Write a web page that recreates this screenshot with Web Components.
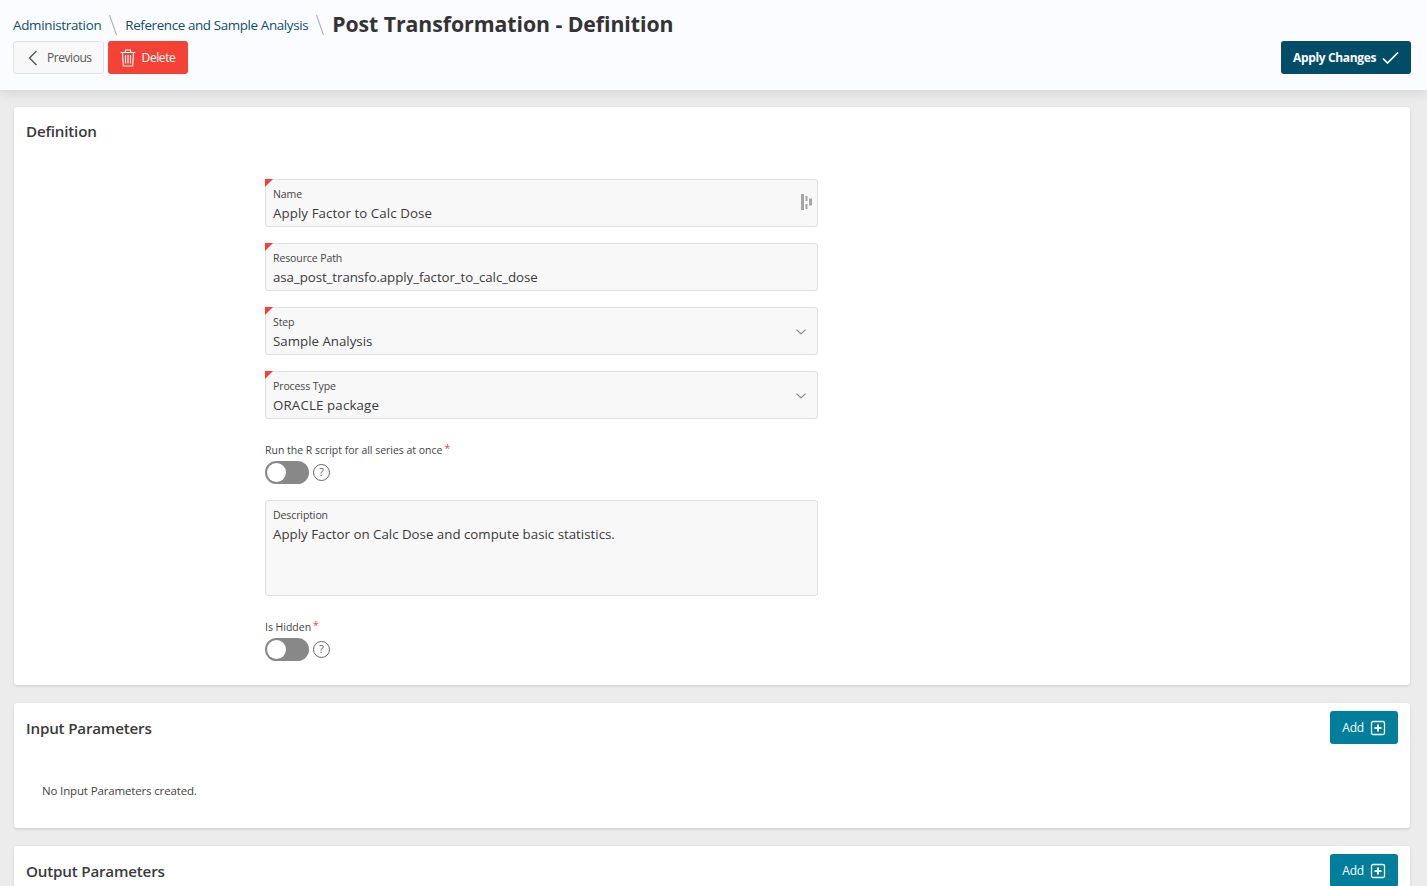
<!DOCTYPE html>
<html lang="en">
<head>
<meta charset="utf-8">
<title>Post Transformation - Definition</title>
<style>
  html, body { margin: 0; height: 886px; overflow: hidden; }
  body { background: #ececec; font-family: "Open Sans", "Noto Sans", sans-serif; color: #333; }
</style>
</head>
<body>
<page-header>
  <a slot="crumb" style="letter-spacing: -.3px">Administration</a>
  <a slot="crumb">Reference and Sample Analysis</a>
  <span slot="title">Post Transformation - Definition</span>
  <ui-button slot="left" kind="plain" icon="back">Previous</ui-button>
  <ui-button slot="left" kind="danger" icon="trash">Delete</ui-button>
  <ui-button slot="right" kind="primary" icon="check" after>Apply Changes</ui-button>
</page-header>

<page-body>
  <ui-card heading="Definition" style="--head: 48px">
    <form-stack>
      <text-field label="Name" value="Apply Factor to Calc Dose" required icon="quick" style="--ls: .08px"></text-field>
      <text-field label="Resource Path" value="asa_post_transfo.apply_factor_to_calc_dose" required style="--ls: -.07px"></text-field>
      <text-field label="Step" value="Sample Analysis" required icon="chevron"></text-field>
      <text-field label="Process Type" value="ORACLE package" required icon="chevron" style="--ls: .14px"></text-field>
      <switch-field label="Run the R script for all series at once"></switch-field>
      <text-field label="Description" value="Apply Factor on Calc Dose and compute basic statistics." area></text-field>
      <switch-field label="Is Hidden"></switch-field>
    </form-stack>
  </ui-card>
  <ui-card heading="Input Parameters">
    <ui-button slot="action" kind="teal" icon="plus" after>Add</ui-button>
    <empty-note>No Input Parameters created.</empty-note>
  </ui-card>
  <ui-card heading="Output Parameters">
    <ui-button slot="action" kind="teal" icon="plus" after>Add</ui-button>
  </ui-card>
</page-body>

<script>
const ICONS = {
  back: '<svg width="16" height="16" viewBox="0 0 16 16" fill="none" stroke="currentColor" stroke-width="1.4"><path d="M10.5 1 3.5 8l7 7"/></svg>',
  trash: '<svg width="16" height="18" viewBox="0 0 16 18" fill="none" stroke="currentColor" stroke-width="1.1"><path d="M.5 3.500h15M5.500 3.500V1h5v2.500M2.500 3.500l.8 13.500h9.400l.8-13.500M5.500 6v8.500M8 6v8.500M10.500 6v8.500"/></svg>',
  check: '<svg width="17" height="14" viewBox="0 0 17 14" fill="none" stroke="currentColor" stroke-width="1.700"><path d="M1 7.500 5.500 12 16 1.500"/></svg>',
  plus: '<svg width="16" height="16" viewBox="0 0 16 16" fill="none" stroke="currentColor"><rect x="1.500" y="1.500" width="13" height="13" rx="1.500" stroke-width="1.300"/><path d="M8 4.500v7M4.500 8h7" stroke-width="2"/></svg>',
  chevron: '<svg width="10" height="6" viewBox="0 0 10 6" fill="none" stroke="#888" stroke-width="1.100"><path d="M.5.700 5 5 9.500.700"/></svg>',
  quick: '<svg width="11" height="16" viewBox="0 0 11 16" fill="#a5a5a5"><rect width="3" height="16"/><rect x="4.500" y="2" width="2" height="5"/><rect x="4.500" y="10" width="2" height="5"/><rect x="8" y="4.500" width="3" height="7"/></svg>'
};

// small helper, every element here is just template + shadow root
class Base extends HTMLElement {
  constructor() {
    super();
    this.attachShadow({ mode: 'open' });
  }
  connectedCallback() {
    this.shadowRoot.innerHTML = `<style>${this.css()}</style>${this.html()}`;
  }
  css() { return ''; }
  html() { return '<slot></slot>'; }
}

class PageHeader extends Base {
  css() { return `
    :host { display: block; height: 90px; box-sizing: border-box; padding: 9px 16px 0 13px;
      background: #fbfcff; box-shadow: 0 2px 12px rgba(0,0,0,.12); position: relative; }
    .crumbs { display: flex; align-items: center; height: 32px; }
    .crumbs ::slotted([slot=crumb]) { font-size: 13.4px; color: #0d5066; letter-spacing: -.38px; }
    .crumbs ::slotted([slot=title]) { font-size: 21.25px; font-weight: 700; color: #333; margin: 0 0 4px 0; letter-spacing: -.05px; }
    .tools { display: flex; justify-content: space-between; }
    .left { display: flex; gap: 4px; }
  `; }
  html() { return `
    <div class="crumbs"><slot name="crumb"></slot><slot name="title"></slot></div>
    <div class="tools"><div class="left"><slot name="left"></slot></div><slot name="right"></slot></div>
  `; }
  connectedCallback() {
    super.connectedCallback();
    // separators go after each crumb
    this.querySelectorAll('[slot=crumb]').forEach(a => {
      a.style.display = 'inline-flex';
      a.style.alignItems = 'center';
      a.insertAdjacentHTML('beforeend', '<svg width="24" height="24" viewBox="0 0 24 24" style="flex:none" fill="none" stroke="#b5b5b5" stroke-width="1.2"><path d="M8.500 2l7 20"/></svg>');
    });
  }
}

class UiButton extends Base {
  css() { return `
    :host { display: inline-block; }
    button { display: flex; align-items: center; height: 33px; box-sizing: border-box; margin: 0; padding: 0 11px;
      border: 1px solid transparent; border-radius: 3px; font: 600 12px "Open Sans", sans-serif; letter-spacing: -.4px; }
    :host([kind=plain]) button { background: #f8f8f8; border-color: #e3e3e3; color: #555; font-weight: 400; padding: 0 11px 0 12px; gap: 5px; letter-spacing: -.45px; }
    :host([kind=danger]) button { background: #f44336; color: #fff; gap: 6px; font-weight: 500; padding-right: 12px; }
    :host([kind=primary]) button { background: #014d68; color: #fff; gap: 6px; font-weight: 700; letter-spacing: -.35px; }
    :host([kind=teal]) button { background: #007e9c; color: #fff; gap: 6px; font-weight: 400; letter-spacing: -.2px; padding-left: 11px; padding-right: 11px; }
    svg { display: block; }
  `; }
  html() {
    const icon = ICONS[this.getAttribute('icon')] || '';
    return this.hasAttribute('after') ? `<button><slot></slot>${icon}</button>` : `<button>${icon}<slot></slot></button>`;
  }
}

class PageBody extends Base {
  css() { return `:host { display: flex; flex-direction: column; gap: 18px; padding: 17px 17px 0 14px; }`; }
}

class UiCard extends Base {
  css() { return `
    :host { display: block; background: #fff; border-radius: 3px; box-shadow: 0 1px 3px rgba(0,0,0,.14); }
    .head { display: flex; justify-content: space-between; align-items: center; height: var(--head, 50px); padding: 0 12px; box-sizing: border-box; }
    .head ::slotted([slot=action]) { margin-bottom: 1px; }
    h2 { margin: 0; font-size: 15.2px; font-weight: 600; color: #3a3a3a; letter-spacing: -.2px; }
  `; }
  html() { return `
    <div class="head"><h2>${this.getAttribute('heading')}</h2><slot name="action"></slot></div>
    <slot></slot>
  `; }
}

class FormStack extends Base {
  css() { return `
    :host { display: flex; flex-direction: column; gap: 16px; width: 553px; margin-left: 251px; padding: 24px 0 24px; }
  `; }
}

class TextField extends Base {
  css() { return `
    :host { display: block; position: relative; height: 48px; box-sizing: border-box; padding: 7px 7px 0;
      background: #f8f8f8; border: 1px solid #dfdfdf; border-radius: 3px; }
    :host([area]) { height: 96px; }
    label { display: block; font-size: 10.500px; line-height: 14px; color: #444; letter-spacing: -.1px; }
    .value { font-size: 13.300px; line-height: 20px; margin-top: 2px; color: #3a3a3a; white-space: nowrap; letter-spacing: var(--ls, 0); }
    .flag { position: absolute; left: -1px; top: -1px; width: 0; height: 0; border-top: 8px solid #f44336; border-right: 8px solid transparent; }
    .icon { position: absolute; right: 5px; top: 14px; display: flex; }
    :host([icon=chevron]) .icon { top: 21px; right: 11.500px; }
  `; }
  html() {
    const icon = ICONS[this.getAttribute('icon')];
    return `
      ${this.hasAttribute('required') ? '<i class="flag"></i>' : ''}
      <label>${this.getAttribute('label')}</label>
      <div class="value">${this.getAttribute('value')}</div>
      ${icon ? `<div class="icon">${icon}</div>` : ''}
    `;
  }
}

class SwitchField extends Base {
  css() { return `
    :host { display: block; padding-top: 8px; }
    label { display: block; font-size: 10.500px; line-height: 14px; color: #444; letter-spacing: -.02px; height: 18px; }
    label b { color: #f44336; font-weight: 400; position: relative; top: -2px; margin-left: 2px; }
    .row { display: flex; align-items: center; gap: 4px; }
    .track { width: 44px; height: 23px; box-sizing: border-box; border-radius: 12px; background: #888; border: 2px solid #888; position: relative; }
    .knob { display: block; width: 19px; height: 19px; border-radius: 50%; background: #fff; }
    .help { width: 17px; height: 17px; margin-bottom: 1px; border: 1px solid #666; border-radius: 50%; box-sizing: border-box; font-size: 10.500px; line-height: 15px; text-align: center; color: #555; }
  `; }
  html() { return `
    <label>${this.getAttribute('label')}<b>*</b></label>
    <div class="row"><span class="track"><span class="knob"></span></span><span class="help">?</span></div>
  `; }
}

class EmptyNote extends Base {
  css() { return `:host { display: block; font-size: 11.500px; color: #444; padding: 29px 28px 28px; line-height: 18px; letter-spacing: -.15px; }`; }
}

customElements.define('page-header', PageHeader);
customElements.define('ui-button', UiButton);
customElements.define('page-body', PageBody);
customElements.define('ui-card', UiCard);
customElements.define('form-stack', FormStack);
customElements.define('text-field', TextField);
customElements.define('switch-field', SwitchField);
customElements.define('empty-note', EmptyNote);
</script>
</body>
</html>
